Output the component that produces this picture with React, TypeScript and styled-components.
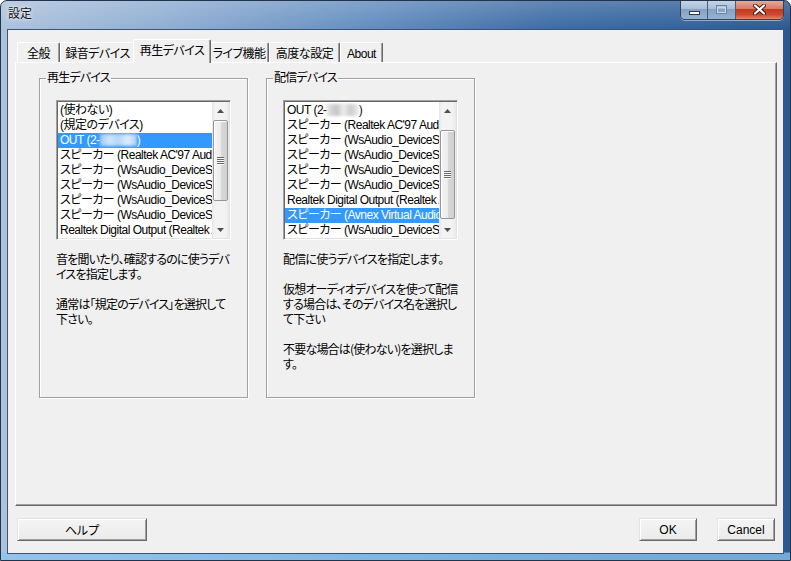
import React from 'react';
import styled, { createGlobalStyle } from 'styled-components';

const GlobalStyle = createGlobalStyle`
  html, body {
    margin: 0;
    padding: 0;
    background: #fff;
  }
  body {
    width: 791px;
    height: 561px;
    overflow: hidden;
  }
`;

const uiFont = `"Liberation Sans", "Noto Sans CJK JP", sans-serif`;

const Frame = styled.div`
  width: 791px;
  height: 561px;
  box-sizing: border-box;
  display: flex;
  flex-direction: column;
  border: 1px solid #22344b;
  border-radius: 7px 7px 0 0;
  overflow: hidden;
  background:
    linear-gradient(to bottom, rgba(255, 255, 255, 0.18) 0, rgba(255, 255, 255, 0) 28px),
    linear-gradient(to bottom, rgba(140, 196, 238, 0) 0, rgba(140, 196, 238, 0) 551px, rgba(140, 196, 238, 0.75) 552px),
    linear-gradient(to right, #adc3dc 0%, #91afd3 20%, #6690c1 45%, #3d6ca5 70%, #2b5a93 100%);
  font-family: ${uiFont};
  font-feature-settings: 'palt' 1;
  font-size: 12px;
  color: #000;
`;

const TitleBar = styled.div`
  flex: 0 0 29px;
  display: flex;
  justify-content: space-between;
  align-items: flex-start;
`;

const Title = styled.div`
  padding: 5px 0 0 7px;
  line-height: 14px;
  font-family: 'Noto Sans CJK JP', sans-serif;
  color: #111;
  text-shadow: 0 0 5px rgba(255, 255, 255, 0.9), 0 0 2px rgba(255, 255, 255, 0.8);
`;

const Captions = styled.div`
  display: flex;
  height: 19px;
  margin: -1px 6px 0 0;
  border: 1px solid #33445a;
  border-top: none;
  border-radius: 0 0 5px 5px;
  overflow: hidden;
  box-shadow: 0 1px 0 rgba(255, 255, 255, 0.45);
`;

const CaptionButton = styled.div<{ $w: number; $close?: boolean }>`
  width: ${(p) => p.$w}px;
  display: flex;
  align-items: center;
  justify-content: center;
  background: ${(p) =>
    p.$close
      ? 'linear-gradient(to bottom, #e8b0a2 0%, #d87a64 45%, #c43a20 50%, #cd4a2e 78%, #e2876c 100%)'
      : 'linear-gradient(to bottom, #c9d7e6 0%, #a9bfd8 45%, #85a2c3 50%, #97b3d1 100%)'};
  & + & {
    border-left: 1px solid #4a5d75;
  }
`;

const Client = styled.div`
  flex: 1;
  margin: 0 7px 7px;
  padding: 9px 6px 0 7px;
  display: flex;
  flex-direction: column;
  background: #f0f0f0;
  box-shadow: 0 0 0 1px #3d5472;
`;

const TabStrip = styled.div`
  flex: 0 0 23px;
  display: flex;
  align-items: flex-end;
  padding-left: 2px;
  position: relative;
  z-index: 1;
`;

const Tab = styled.div<{ $w: number; $active?: boolean }>`
  box-sizing: border-box;
  width: ${(p) => (p.$active ? p.$w + 4 : p.$w)}px;
  height: ${(p) => (p.$active ? 24 : 20)}px;
  margin: ${(p) => (p.$active ? '0 -2px -1px' : '0')};
  padding-top: 4px;
  line-height: 14px;
  letter-spacing: -0.5px;
  text-align: center;
  white-space: nowrap;
  background: #f0f0f0;
  border-top: 1px solid #fff;
  border-left: 1px solid #fff;
  border-right: 1px solid #696969;
  border-radius: 2px 2px 0 0;
  box-shadow: inset -1px 0 0 #a0a0a0;
  position: relative;
  z-index: ${(p) => (p.$active ? 2 : 0)};
`;

const Panel = styled.div`
  flex: 0 0 444px;
  box-sizing: border-box;
  display: flex;
  align-items: flex-start;
  gap: 18px;
  padding: 8px 0 0 23px;
  border: 1px solid;
  border-color: #fff #696969 #696969 #fff;
  box-shadow: inset -1px -1px 0 #a0a0a0;
`;

const GroupBox = styled.fieldset`
  box-sizing: border-box;
  width: 209px;
  height: 327px;
  min-width: 0;
  margin: 0;
  padding: 0 0 0 6px;
  border: 1px solid #a0a0a0;
  box-shadow: inset 1px 1px 0 #fff, 1px 1px 0 #fff;
`;

const Legend = styled.legend`
  padding: 0 1px;
  line-height: 14px;
  letter-spacing: -0.8px;
`;

const GroupBody = styled.div`
  padding: 15px 0 0 10px;
`;

const ListBox = styled.div`
  box-sizing: border-box;
  width: 175px;
  height: 140px;
  display: flex;
  padding: 1px;
  background: #fff;
  border: 1px solid;
  border-color: #a0a0a0 #fff #fff #a0a0a0;
  box-shadow: inset 1px 1px 0 #696969, inset -1px -1px 0 #e3e3e3;
`;

const Items = styled.div`
  flex: 1;
  min-width: 0;
  padding-top: 1px;
  overflow: hidden;
`;

const Item = styled.div<{ $selected?: boolean }>`
  height: 15px;
  line-height: 15px;
  padding-left: 2px;
  letter-spacing: -0.5px;
  white-space: nowrap;
  overflow: hidden;
  background: ${(p) => (p.$selected ? '#3399ff' : 'transparent')};
  color: ${(p) => (p.$selected ? '#fff' : '#000')};
`;

const Smudge = styled.span<{ $w: number; $onBlue?: boolean }>`
  display: inline-block;
  width: ${(p) => p.$w}px;
  height: 12px;
  vertical-align: -2px;
  filter: blur(1.4px);
  background: ${(p) =>
    p.$onBlue
      ? 'linear-gradient(to right, #9ccaf7, #cfe4fa 25%, #b4d6f8 50%, #e0edfb 75%, #a8cff6)'
      : 'linear-gradient(to right, #e4e4e4, #c4c4c4 30%, #ededed 52%, #cbcbcb 74%, #efefef)'};
`;

const ScrollBar = styled.div`
  flex: 0 0 17px;
  display: flex;
  flex-direction: column;
  background: linear-gradient(to right, #e6e6e6 0, #f3f3f3 3px, #f3f3f3 13px, #e9e9e9 17px);
`;

const ArrowBox = styled.div<{ $down?: boolean }>`
  flex: 0 0 17px;
  display: flex;
  align-items: center;
  justify-content: center;
  margin-top: ${(p) => (p.$down ? 'auto' : '0')};
`;

const Thumb = styled.div<{ $offset: number; $size: number }>`
  box-sizing: border-box;
  flex: 0 0 ${(p) => p.$size}px;
  margin: ${(p) => p.$offset}px 1px 0;
  display: flex;
  align-items: center;
  justify-content: center;
  border: 1px solid #979797;
  border-radius: 2px;
  background: linear-gradient(to right, #f5f5f5 0%, #ececec 50%, #d9d9d9 51%, #d0d0d0 100%);
  box-shadow: inset 1px 1px 0 #fff;
`;

const Description = styled.div`
  margin-top: 11px;
  font-family: 'Noto Sans CJK JP', sans-serif;
  line-height: 15px;
  letter-spacing: -0.8px;
  white-space: nowrap;
`;

const Para = styled.p`
  margin: 0 0 15px;
`;

const Footer = styled.div`
  flex: 0 0 23px;
  display: flex;
  gap: 20px;
  margin-top: 12px;
  padding: 0 2px;
`;

const Button = styled.button<{ $w: number; $push?: boolean }>`
  box-sizing: border-box;
  width: ${(p) => p.$w}px;
  height: 23px;
  margin: 0 ${(p) => (p.$push ? 'auto' : '0')} 0 0;
  padding: 0;
  font: inherit;
  color: #000;
  background: linear-gradient(to bottom, #f4f4f4, #ebebeb);
  border: 1px solid;
  border-color: #e3e3e3 #696969 #696969 #e3e3e3;
  box-shadow: inset 1px 1px 0 #fff, inset -1px -1px 0 #a0a0a0;
`;

const UpArrow = () => (
  <svg width="7" height="4" viewBox="0 0 7 4">
    <polygon points="0,4 3.5,0 7,4" fill="#4f4f4f" />
  </svg>
);

const DownArrow = () => (
  <svg width="7" height="4" viewBox="0 0 7 4">
    <polygon points="0,0 7,0 3.5,4" fill="#4f4f4f" />
  </svg>
);

const Grip = () => (
  <svg width="7" height="8" viewBox="0 0 7 8">
    {[0, 2, 4, 6].map((y) => (
      <g key={y}>
        <rect x="0" y={y} width="7" height="1" fill="#6a6a6a" />
        <rect x="0" y={y + 1} width="7" height="1" fill="#fafafa" />
      </g>
    ))}
  </svg>
);

type Row = { label: React.ReactNode; selected?: boolean };

const DeviceList = ({ rows, thumbOffset, thumbSize }: { rows: Row[]; thumbOffset: number; thumbSize: number }) => (
  <ListBox>
    <Items>
      {rows.map((r, i) => (
        <Item key={i} $selected={r.selected}>
          {r.label}
        </Item>
      ))}
    </Items>
    <ScrollBar>
      <ArrowBox>
        <UpArrow />
      </ArrowBox>
      <Thumb $offset={thumbOffset} $size={thumbSize}>
        <Grip />
      </Thumb>
      <ArrowBox $down>
        <DownArrow />
      </ArrowBox>
    </ScrollBar>
  </ListBox>
);

const ws = 'スピーカー (WsAudio_DeviceS1)';

const playbackRows: Row[] = [
  { label: '(使わない)' },
  { label: '(規定のデバイス)' },
  {
    label: (
      <>
        OUT (2-<Smudge $w={37} $onBlue />)
      </>
    ),
    selected: true,
  },
  { label: "スピーカー (Realtek AC'97 Audio)" },
  { label: ws },
  { label: ws },
  { label: ws },
  { label: ws },
  { label: "Realtek Digital Output (Realtek AC'97 Audio)" },
];

const streamRows: Row[] = [
  {
    label: (
      <>
        OUT (2-<Smudge $w={32} />)
      </>
    ),
  },
  { label: "スピーカー (Realtek AC'97 Audio)" },
  { label: ws },
  { label: ws },
  { label: ws },
  { label: ws },
  { label: "Realtek Digital Output (Realtek AC'97 Audio)" },
  { label: 'スピーカー (Avnex Virtual Audio Device)', selected: true },
  { label: ws },
];

const tabs = [
  { label: '全般', w: 43 },
  { label: '録音デバイス', w: 75 },
  { label: '再生デバイス', w: 74, active: true },
  { label: 'ライブ機能', w: 60 },
  { label: '高度な設定', w: 71 },
  { label: 'About', w: 43 },
];

const App = () => {
  return (
    <>
      <GlobalStyle />
      <Frame>
        <TitleBar>
          <Title>設定</Title>
          <Captions>
            <CaptionButton $w={26}>
              <svg width="11" height="12" viewBox="0 0 11 12">
                <rect x="0.5" y="7.5" width="10" height="3" fill="#fff" stroke="#2b3950" />
              </svg>
            </CaptionButton>
            <CaptionButton $w={27}>
              <svg width="11" height="9" viewBox="0 0 11 9">
                <rect x="0.5" y="0.5" width="10" height="8" fill="none" stroke="#6a83a1" />
                <rect x="1.5" y="2.5" width="8" height="5" fill="none" stroke="#c9d7e6" />
              </svg>
            </CaptionButton>
            <CaptionButton $w={47} $close>
              <svg width="13" height="11" viewBox="0 0 13 11">
                <path d="M2 1.5 L11 9.5 M11 1.5 L2 9.5" stroke="#41170f" strokeWidth="4" strokeLinecap="round" />
                <path d="M2 1.5 L11 9.5 M11 1.5 L2 9.5" stroke="#fff" strokeWidth="2.2" strokeLinecap="round" />
              </svg>
            </CaptionButton>
          </Captions>
        </TitleBar>

        <Client>
          <TabStrip>
            {tabs.map((t) => (
              <Tab key={t.label} $w={t.w} $active={t.active}>
                {t.label}
              </Tab>
            ))}
          </TabStrip>

          <Panel>
            <GroupBox>
              <Legend>再生デバイス</Legend>
              <GroupBody>
                <DeviceList rows={playbackRows} thumbOffset={1} thumbSize={81} />
                <Description>
                  <Para>
                    音を聞いたり、確認するのに使うデバ
                    <br />
                    イスを指定します。
                  </Para>
                  <Para>
                    通常は「規定のデバイス」を選択して
                    <br />
                    下さい。
                  </Para>
                </Description>
              </GroupBody>
            </GroupBox>

            <GroupBox>
              <Legend>配信デバイス</Legend>
              <GroupBody>
                <DeviceList rows={streamRows} thumbOffset={11} thumbSize={89} />
                <Description>
                  <Para>配信に使うデバイスを指定します。</Para>
                  <Para>
                    仮想オーディオデバイスを使って配信
                    <br />
                    する場合は、そのデバイス名を選択し
                    <br />
                    て下さい
                  </Para>
                  <Para>
                    不要な場合は(使わない)を選択しま
                    <br />
                    す。
                  </Para>
                </Description>
              </GroupBody>
            </GroupBox>
          </Panel>

          <Footer>
            <Button $w={130} $push>
              ヘルプ
            </Button>
            <Button $w={58}>OK</Button>
            <Button $w={58}>Cancel</Button>
          </Footer>
        </Client>
      </Frame>
    </>
  );
};

export default App;
